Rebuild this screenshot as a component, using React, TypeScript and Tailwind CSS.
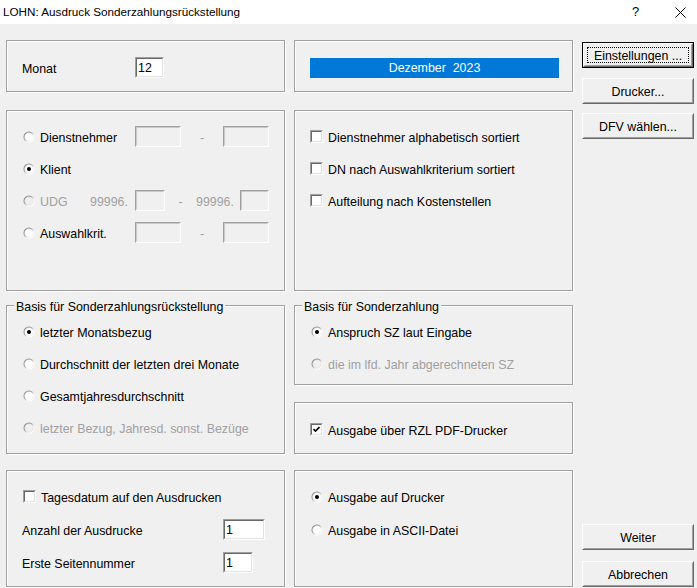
import { ReactNode } from "react"

const font = { fontFamily: '"Liberation Sans", Arial, sans-serif' }

const Panel = ({ className = "", children }: { className?: string; children?: ReactNode }) => (
  <div className={`relative border border-[#a0a0a0] shadow-[1px_1px_0_#fff,inset_1px_1px_0_#fff] ${className}`}>
    {children}
  </div>
)

const Legend = ({ text }: { text: string }) => (
  <div className="absolute left-[7px] top-[-5px] bg-[#f0f0f0] px-[2px] leading-[12px] text-black">{text}</div>
)

// label text sits a little lower than the box centre, as in the Windows dialog
const T = ({ children, className = "" }: { children: ReactNode; className?: string }) => (
  <span className={`pt-[3px] ${className}`}>{children}</span>
)

const Radio = ({ checked = false, disabled = false }: { checked?: boolean; disabled?: boolean }) => (
  <svg width="12" height="12" viewBox="0 0 12 12" className="shrink-0">
    <defs>
      <linearGradient id="rg" x1="0" y1="0" x2="1" y2="1">
        <stop offset="0.35" stopColor="#8c8c8c" />
        <stop offset="0.65" stopColor="#ffffff" />
      </linearGradient>
    </defs>
    <circle cx="6" cy="6" r="5.5" fill="url(#rg)" />
    <circle cx="6" cy="6" r="4.3" fill={disabled ? "#f0f0f0" : "#fff"} stroke={disabled ? "#d8d8d8" : "#e6e6e6"} strokeWidth="0.6" />
    {checked && <circle cx="6" cy="6" r="2" fill="#000" />}
  </svg>
)

const Check = ({ checked = false }: { checked?: boolean }) => (
  <div className="w-[13px] h-[13px] shrink-0 border border-t-[#a0a0a0] border-l-[#a0a0a0] border-b-white border-r-white">
    <div className="w-full h-full bg-white border border-t-[#696969] border-l-[#696969] border-b-[#e3e3e3] border-r-[#e3e3e3] flex items-center justify-center">
      {checked && (
        <svg width="7" height="7" viewBox="0 0 7 7">
          <path d="M0.5 3 L2.5 5 L6.5 1" stroke="#000" strokeWidth="1.6" fill="none" />
        </svg>
      )}
    </div>
  </div>
)

const Field = ({ w, value, disabled = false }: { w: string; value?: string; disabled?: boolean }) => (
  <div className={`${w} h-[21px] shrink-0 border border-t-[#a0a0a0] border-l-[#a0a0a0] border-b-white border-r-white`}>
    <div
      className={`w-full h-full border ${
        disabled
          ? "bg-[#f0f0f0] border-t-[#c8c8c8] border-l-[#c8c8c8] border-b-[#f0f0f0] border-r-[#f0f0f0]"
          : "bg-white border-t-[#696969] border-l-[#696969] border-b-[#e3e3e3] border-r-[#e3e3e3]"
      } pl-[1px] pt-[1px] leading-[17px] text-black`}
    >
      {value}
    </div>
  </div>
)

const Btn = ({ label, def = false, className = "" }: { label: string; def?: boolean; className?: string }) => (
  <div className={`h-[26px] w-[112px] ${def ? "border border-black" : ""} ${className}`}>
    <div className="w-full h-full border border-t-white border-l-white border-b-[#696969] border-r-[#696969]">
      <div className="w-full h-full border border-transparent border-b-[#a0a0a0] border-r-[#a0a0a0] flex items-center justify-center p-[2px]">
        <div className={`w-full h-full flex items-center justify-center pt-[2px] ${def ? "outline-1 outline-dotted outline-black -outline-offset-1" : ""}`}>
          {label}
        </div>
      </div>
    </div>
  </div>
)

export default function App() {
  return (
    <div style={font} className="w-[697px] h-[588px] bg-[#f0f0f0] overflow-hidden text-[12.4px] text-black">
      {/* Title bar */}
      <div className="h-[24px] bg-white flex items-center">
        <div className="pl-[3px] text-[11.7px] flex-1">LOHN: Ausdruck Sonderzahlungsrückstellung</div>
        <div className="w-[12px] text-[13px] mr-[31px]">?</div>
        <svg width="11" height="11" viewBox="0 0 11 11" className="mr-[11px]">
          <path d="M0.5 0.5 L10.5 10.5 M10.5 0.5 L0.5 10.5" stroke="#000" strokeWidth="1" />
        </svg>
      </div>

      <div className="flex pl-[6px] pt-[16px]">
        {/* Left column */}
        <div className="w-[279px] flex flex-col">
          <Panel className="h-[52px] pt-[16px] pl-[15px]">
            <div className="flex items-center h-[21px]">
              <T className="w-[113px]">Monat</T>
              <Field w="w-[29px]" value="12" />
            </div>
          </Panel>

          <Panel className="h-[181px] mt-[18px] pt-[15px] pl-[16px] flex flex-col gap-[11px]">
            <div className="flex items-center h-[21px]">
              <div className="w-[112px] flex items-center gap-[5px]"><Radio /><T>Dienstnehmer</T></div>
              <Field w="w-[46px]" disabled />
              <T className="w-[42px] text-center text-[#a0a0a0]">-</T>
              <Field w="w-[46px]" disabled />
            </div>
            <div className="flex items-center h-[21px]">
              <div className="flex items-center gap-[5px]"><Radio checked /><T>Klient</T></div>
            </div>
            <div className="flex items-center h-[21px] text-[#a0a0a0]">
              <div className="w-[67px] flex items-center gap-[5px]"><Radio disabled /><T>UDG</T></div>
              <T className="w-[45px]">99996.</T>
              <Field w="w-[30px]" disabled />
              <T className="w-[31px] text-center">-</T>
              <T className="w-[44px]">99996.</T>
              <Field w="w-[29px]" disabled />
            </div>
            <div className="flex items-center h-[21px]">
              <div className="w-[112px] flex items-center gap-[5px]"><Radio /><T>Auswahlkrit.</T></div>
              <Field w="w-[46px]" disabled />
              <T className="w-[42px] text-center text-[#a0a0a0]">-</T>
              <Field w="w-[46px]" disabled />
            </div>
          </Panel>

          <Panel className="h-[149px] mt-[14px] pt-[15px] pl-[16px] flex flex-col gap-[11px]">
            <Legend text="Basis für Sonderzahlungsrückstellung" />
            <div className="flex items-center h-[21px] gap-[5px]"><Radio checked /><T>letzter Monatsbezug</T></div>
            <div className="flex items-center h-[21px] gap-[5px]"><Radio /><T>Durchschnitt der letzten drei Monate</T></div>
            <div className="flex items-center h-[21px] gap-[5px]"><Radio /><T>Gesamtjahresdurchschnitt</T></div>
            <div className="flex items-center h-[21px] gap-[5px] text-[#a0a0a0]"><Radio disabled /><T>letzter Bezug, Jahresd. sonst. Bezüge</T></div>
          </Panel>

          <Panel className="h-[117px] mt-[16px] pt-[15px] pl-[15px] flex flex-col gap-[12px]">
            <div className="flex items-center h-[21px] gap-[5px] pl-[1px]"><Check /><T>Tagesdatum auf den Ausdrucken</T></div>
            <div className="flex items-center h-[21px]">
              <T className="w-[201px]">Anzahl der Ausdrucke</T>
              <Field w="w-[42px]" value="1" />
            </div>
            <div className="flex items-center h-[21px]">
              <T className="w-[201px]">Erste Seitennummer</T>
              <Field w="w-[30px]" value="1" />
            </div>
          </Panel>
        </div>

        {/* Middle column */}
        <div className="w-[279px] ml-[9px] flex flex-col">
          <Panel className="h-[52px] pt-[17px] pl-[15px]">
            <div className="w-[249px] h-[20px] bg-[#0078d7] text-white flex items-center justify-center whitespace-pre">
              Dezember  2023
            </div>
          </Panel>

          <Panel className="h-[181px] mt-[18px] pt-[15px] pl-[15px] flex flex-col gap-[11px]">
            <div className="flex items-center h-[21px] gap-[5px]"><Check /><T>Dienstnehmer alphabetisch sortiert</T></div>
            <div className="flex items-center h-[21px] gap-[5px]"><Check /><T>DN nach Auswahlkriterium sortiert</T></div>
            <div className="flex items-center h-[21px] gap-[5px]"><Check /><T>Aufteilung nach Kostenstellen</T></div>
          </Panel>

          <Panel className="h-[80px] mt-[14px] pt-[15px] pl-[16px] flex flex-col gap-[11px]">
            <Legend text="Basis für Sonderzahlung" />
            <div className="flex items-center h-[21px] gap-[5px]"><Radio checked /><T>Anspruch SZ laut Eingabe</T></div>
            <div className="flex items-center h-[21px] gap-[5px] text-[#a0a0a0]"><Radio disabled /><T>die im lfd. Jahr abgerechneten SZ</T></div>
          </Panel>

          <Panel className="h-[52px] mt-[17px] pt-[16px] pl-[15px]">
            <div className="flex items-center h-[21px] gap-[5px]"><Check checked /><T>Ausgabe über RZL PDF-Drucker</T></div>
          </Panel>

          <Panel className="h-[117px] mt-[16px] pt-[15px] pl-[16px] flex flex-col gap-[12px]">
            <div className="flex items-center h-[21px] gap-[5px]"><Radio checked /><T>Ausgabe auf Drucker</T></div>
            <div className="flex items-center h-[21px] gap-[5px]"><Radio /><T>Ausgabe in ASCII-Datei</T></div>
          </Panel>
        </div>

        {/* Buttons */}
        <div className="ml-[9px] h-[547px] flex flex-col justify-between">
          <div className="flex flex-col pt-[2px]">
            <Btn label="Einstellungen ..." def />
            <Btn label="Drucker..." className="mt-[10px]" />
            <Btn label="DFV wählen..." className="mt-[9px]" />
          </div>
          <div className="flex flex-col">
            <Btn label="Weiter" />
            <Btn label="Abbrechen" className="mt-[11px]" />
          </div>
        </div>
      </div>
    </div>
  )
}
